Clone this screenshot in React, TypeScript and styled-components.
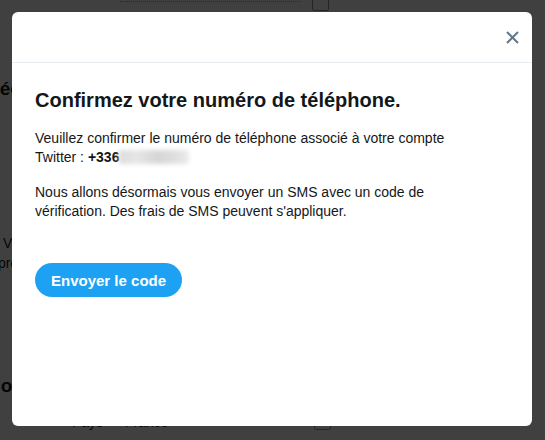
import styled, { createGlobalStyle } from "styled-components";

const GlobalStyle = createGlobalStyle`
  html, body {
    margin: 0;
    padding: 0;
  }
  body {
    font-family: "Liberation Sans", Arial, sans-serif;
    background: #ffffff;
  }
`;

const Screen = styled.div`
  position: relative;
  width: 545px;
  height: 440px;
  overflow: hidden;
  background: #ffffff;
  color: #14171a;
  font-family: "Liberation Sans", Arial, sans-serif;
`;

/* page behind the dialog, mostly hidden */
const BackPage = styled.div`
  display: flex;
  flex-direction: column;
`;

const TopRow = styled.div`
  display: flex;
  align-items: flex-end;
  height: 11px;
  padding-left: 120px;
  gap: 12px;
`;

const DottedLine = styled.div`
  width: 180px;
  border-bottom: 1px dotted #9aa4ad;
  margin-bottom: 9px;
`;

const Checkbox = styled.div`
  width: 17px;
  height: 15px;
  border: 1px solid #8899a6;
  border-radius: 2px;
  box-sizing: border-box;
  flex-shrink: 0;
`;

const BackHeading = styled.div<{ $shift: number; $top: number }>`
  margin-top: ${({ $top }) => $top}px;
  margin-left: ${({ $shift }) => $shift}px;
  font-size: 19px;
  font-weight: 700;
  line-height: 24px;
  white-space: nowrap;
`;

const BackLine = styled.div<{ $shift: number; $top?: number }>`
  margin-top: ${({ $top }) => $top ?? 0}px;
  margin-left: ${({ $shift }) => $shift}px;
  font-size: 14px;
  line-height: 20px;
  white-space: nowrap;
`;

const BackField = styled.div`
  display: flex;
  align-items: center;
  margin-top: 14px;
  padding-left: 72px;
  font-size: 14px;
  line-height: 20px;
`;

const FieldLabel = styled.span`
  width: 53px;
`;

const FieldValue = styled.span`
  width: 189px;
`;

/* dialog */
const Overlay = styled.div`
  position: absolute;
  inset: 0;
  background: rgba(0, 0, 0, 0.75);
  display: flex;
  align-items: flex-start;
  justify-content: flex-start;
  padding: 12px 0 0 12px;
`;

const Dialog = styled.div`
  width: 520px;
  height: 414px;
  background: #ffffff;
  border-radius: 6px;
  display: flex;
  flex-direction: column;
  overflow: hidden;
`;

const DialogHeader = styled.div`
  height: 50px;
  border-bottom: 1px solid #e6ecf0;
  display: flex;
  align-items: center;
  justify-content: flex-end;
  padding-right: 7px;
  flex-shrink: 0;
`;

const CloseButton = styled.button`
  width: 26px;
  height: 26px;
  border: none;
  background: transparent;
  padding: 0;
  display: flex;
  align-items: center;
  justify-content: center;
  cursor: pointer;
`;

const DialogBody = styled.div`
  padding: 24px 23px 0 23px;
  display: flex;
  flex-direction: column;
`;

const Title = styled.h2`
  margin: 0;
  font-size: 20px;
  font-weight: 700;
  line-height: 26px;
  color: #14171a;
`;

const Paragraph = styled.p<{ $top: number }>`
  margin: ${({ $top }) => $top}px 0 0;
  max-width: 428px;
  font-size: 14px;
  line-height: 19px;
  color: #14171a;
`;

const Phone = styled.strong`
  font-weight: 700;
`;

const Blurred = styled.span`
  display: inline-block;
  vertical-align: -2px;
  width: 70px;
  height: 14px;
  background: linear-gradient(
    90deg,
    #dcdcdc 0%,
    #e6e6e6 25%,
    #d6d6d6 55%,
    #dedede 80%,
    #ececec 100%
  );
  filter: blur(2px);
`;

const SendButton = styled.button`
  align-self: flex-start;
  margin-top: 42px;
  height: 34px;
  padding: 0 16px;
  border: none;
  border-radius: 17px;
  background: #1da1f2;
  color: #ffffff;
  font-family: "Liberation Sans", Arial, sans-serif;
  font-size: 15px;
  font-weight: 700;
  cursor: pointer;
`;

function CloseIcon() {
  return (
    <svg width="13" height="13" viewBox="0 0 13 13" fill="none">
      <path d="M1 1L12 12M12 1L1 12" stroke="#657786" strokeWidth="2" />
    </svg>
  );
}

export default function App() {
  return (
    <Screen>
      <GlobalStyle />
      <BackPage>
        <TopRow>
          <DottedLine />
          <Checkbox />
        </TopRow>
        <BackHeading $shift={-13} $top={66}>
          Sécurité
        </BackHeading>
        <BackLine $shift={3} $top={132}>
          Vérification de connexion
        </BackLine>
        <BackLine $shift={-2}>préférences de sécurité</BackLine>
        <BackHeading $shift={-13} $top={101}>
          Contenu
        </BackHeading>
        <BackField>
          <FieldLabel>Pays</FieldLabel>
          <FieldValue>France</FieldValue>
          <Checkbox />
        </BackField>
      </BackPage>

      <Overlay>
        <Dialog>
          <DialogHeader>
            <CloseButton aria-label="Fermer">
              <CloseIcon />
            </CloseButton>
          </DialogHeader>
          <DialogBody>
            <Title>Confirmez votre numéro de téléphone.</Title>
            <Paragraph $top={16}>
              Veuillez confirmer le numéro de téléphone associé à votre compte
              Twitter : <Phone>+336</Phone>
              <Blurred />
            </Paragraph>
            <Paragraph $top={16}>
              Nous allons désormais vous envoyer un SMS avec un code de
              vérification. Des frais de SMS peuvent s'appliquer.
            </Paragraph>
            <SendButton>Envoyer le code</SendButton>
          </DialogBody>
        </Dialog>
      </Overlay>
    </Screen>
  );
}
